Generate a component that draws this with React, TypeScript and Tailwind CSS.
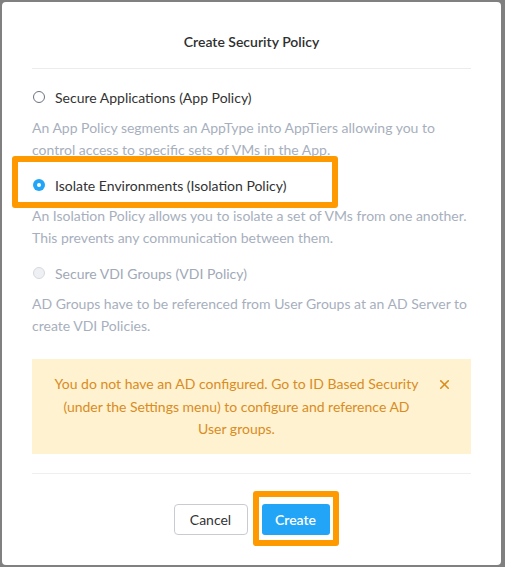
import { X } from "lucide-react";

type Option = {
  label: string;
  desc: string;
  state: "off" | "on" | "disabled";
};

const options: Option[] = [
  {
    label: "Secure Applications (App Policy)",
    desc: "An App Policy segments an AppType into AppTiers allowing you to control access to specific sets of VMs in the App.",
    state: "off",
  },
  {
    label: "Isolate Environments (Isolation Policy)",
    desc: "An Isolation Policy allows you to isolate a set of VMs from one another. This prevents any communication between them.",
    state: "on",
  },
  {
    label: "Secure VDI Groups (VDI Policy)",
    desc: "AD Groups have to be referenced from User Groups at an AD Server to create VDI Policies.",
    state: "disabled",
  },
];

const Radio = ({ state }: { state: Option["state"] }) => {
  if (state === "on") {
    return (
      <span className="flex h-3 w-3 shrink-0 items-center justify-center rounded-full bg-[#22a5f7]">
        <span className="h-1 w-1 rounded-full bg-white" />
      </span>
    );
  }
  return (
    <span
      className={
        state === "disabled"
          ? "h-3 w-3 shrink-0 rounded-full border border-[#d5d9e0] bg-[#eef0f3]"
          : "h-3 w-3 shrink-0 rounded-full border border-[#6b7280] bg-white"
      }
    />
  );
};

export default function App() {
  return (
    <div className="h-[567px] w-[505px] bg-[#808080] pl-[2px] pr-[4px] pt-[2px] pb-[2px] font-['Lato',sans-serif]">
      <div className="relative flex h-full flex-col rounded-[4px] bg-white px-[30px]">
        {/* Header */}
        <div className="flex h-[67px] items-center justify-center border-b border-[#ececec] pt-[13px]">
          <h1 className="text-[14px] font-semibold text-[#2f2f2f]">Create Security Policy</h1>
        </div>

        {/* Options */}
        <div className="flex flex-col pt-[17px]">
          {options.map((o, i) => (
            <div key={i} className="mb-[13px]">
              <div className="flex h-[22px] items-center gap-[10px] pl-[1px]">
                <Radio state={o.state} />
                <span
                  className={`text-[14px] ${o.state === "disabled" ? "text-[#a1a9b6]" : "text-[#333]"}`}
                >
                  {o.label}
                </span>
              </div>
              <p className="mt-[9px] text-[14px] leading-[22px] text-[#a7afbd]">{o.desc}</p>
            </div>
          ))}
        </div>

        {/* Warning */}
        <div className="mt-[9px] flex items-start bg-[#fef2d0] pl-[20px] pr-[19px] pt-[14px] pb-[13px]">
          <p className="flex-1 text-center text-[14px] leading-[22.5px] text-[#d98c1f]">
            You do not have an AD configured. Go to ID Based Security (under the Settings menu) to
            configure and reference AD User groups.
          </p>
          <X className="ml-[16px] mt-[4px] h-[15px] w-[15px] text-[#d98c1f]" strokeWidth={2.6} />
        </div>

        {/* Footer */}
        <div className="mt-[19px] flex flex-1 items-center justify-center gap-[14px] border-t border-[#efefef]">
          <button className="h-[31px] w-[74px] rounded-[4px] border border-[#c8ccd2] bg-white text-[14px] text-[#333]">
            Cancel
          </button>
          <button className="h-[31px] w-[68px] rounded-[3px] bg-[#22a5f7] text-[14px] font-semibold text-white">
            Create
          </button>
        </div>

        {/* Annotation highlights */}
        <div className="pointer-events-none absolute left-[10px] top-[154px] h-[52px] w-[326px] rounded-[3px] border-[6px] border-[#ff9900]" />
        <div className="pointer-events-none absolute left-[251px] top-[489px] h-[55px] w-[86px] rounded-[3px] border-[6px] border-[#ff9900]" />
      </div>
    </div>
  );
}
